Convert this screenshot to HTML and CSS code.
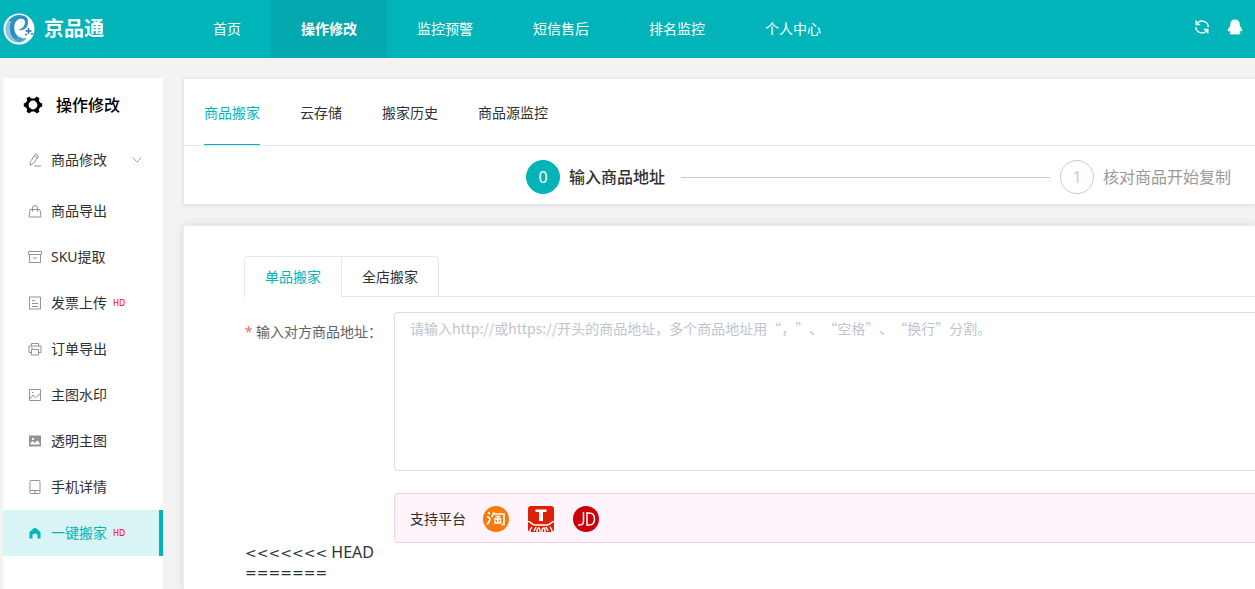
FILE: index.html
```html
<!DOCTYPE html>
<html lang="zh-CN">
<head>
<meta charset="utf-8">
<title>京品通</title>
<link rel="stylesheet" href="styles.css">
</head>
<body>
<header class="topbar">
  <a class="brand" href="#">
    <svg class="brand-logo" viewBox="0 0 32 32" aria-hidden="true">
      <defs><linearGradient id="swirl" x1="0" y1="0" x2="1" y2="1"><stop offset="0" stop-color="#2aa9bd"/><stop offset="0.5" stop-color="#2c86c4"/><stop offset="1" stop-color="#5cc0cc"/></linearGradient></defs>
      <circle cx="16" cy="16" r="15.5" fill="#fff"/>
      <path d="M6 7C1 14 2 22 8 27c6 4 12 3 16-2-5 1-10-1-12-6-2-6 0-11 4-13 3-1 6 0 6 3 0 4-3 7-7 8 6 1 10-2 10-7 1-6-4-8-9-8-4 0-8 2-10 5z" fill="url(#swirl)"/>
      <path d="M5 8c-4 7-3 14 2 18 2 2 5 3 8 3C8 25 5 17 8 8z" fill="#8bc8dc"/>
      <path d="M25.500 15v6m-3-3h6M22 21.500h2m4-.5h2" stroke="#2477b8" stroke-width="1.500" fill="none"/>
    </svg>
    <span>京品通</span>
  </a>
  <nav class="topnav">
    <a href="#">首页</a>
    <a class="is-active" href="#">操作修改</a>
    <a href="#">监控预警</a>
    <a href="#">短信售后</a>
    <a href="#">排名监控</a>
    <a href="#">个人中心</a>
  </nav>
  <div class="tools">
    <button type="button" aria-label="刷新">
      <svg width="16" height="16" viewBox="0 0 16 16" fill="none" stroke="#fff" stroke-width="1.4"><path d="M3 4.5A6.3 6.3 0 0 1 14.3 8M13 11.500A6.300 6.300 0 0 1 1.700 8M2.200 1.500v4h4M13.800 14.500v-4h-4"/></svg>
    </button>
    <button type="button" aria-label="QQ客服">
      <svg width="16" height="16" viewBox="0 0 16 16" fill="#fff"><path d="M8 .5C5 .5 3.300 2.600 3.300 5.200v1.600C2 8.300.8 10 .8 11.700c0 1 .9.900 1.600-.2.200.8.600 1.500 1.200 2-.8.300-1.100.8-1.100 1.200 0 1 4.500 1 5.500.200 1 .8 5.500.8 5.500-.2 0-.4-.3-.9-1.100-1.200.6-.5 1-1.200 1.200-2 .7 1.100 1.600 1.200 1.600.2 0-1.700-1.200-3.400-2.500-4.900V5.200C12.700 2.600 11 .5 8 .5z"/></svg>
    </button>
  </div>
</header>

<div class="layout">
  <aside class="sidebar">
    <h2 class="side-title">
      <svg width="20" height="20" viewBox="0 0 20 20"><path fill="#000" fill-rule="evenodd" d="M6.500 1.500c1 1.600 1.600 2 3.500 2s2.500-.4 3.500-2l3 1.800c-1 1.700-.8 2.500.2 3.700.6 1 1.200 1.200 2.500 1.300v3.400c-1.300.1-1.900.3-2.500 1.300-1 1.200-1.200 2-.2 3.700l-3 1.800c-1-1.600-1.600-2-3.500-2s-2.500.4-3.500 2l-3-1.800c1-1.700.8-2.500-.2-3.700-.6-1-1.200-1.200-2.500-1.300V8.300C2.100 8.200 2.700 8 3.300 7c1-1.200 1.200-2 .2-3.700zM10 5.600a4.400 4.400 0 1 0 0 8.800 4.400 4.400 0 0 0 0-8.800z"/></svg>
      <span>操作修改</span>
    </h2>
    <nav class="menu">
      <a class="menu-item is-group" href="#">
        <svg class="icon" viewBox="0 0 14 14"><path d="M2.500 8.500L7.500 1l3 2-5 7.500-3.300 1.800zM6.300 2.800l3 2M6 13h7"/></svg>
        <span>商品修改</span>
        <svg class="chevron" viewBox="0 0 10 6"><path d="M.5.5L5 5 9.500.5"/></svg>
      </a>
      <a class="menu-item" href="#">
        <svg class="icon" viewBox="0 0 14 14"><path d="M2 5.500h10l1 7.500H1zM4.500 7.500V4a2.500 2.500 0 0 1 5 0v3.500"/></svg>
        <span>商品导出</span>
      </a>
      <a class="menu-item" href="#">
        <svg class="icon" viewBox="0 0 14 14"><path d="M.5 1.500h13v3H.5zM1.500 4.500v8h11v-8M5 8h4"/></svg>
        <span>SKU提取</span>
      </a>
      <a class="menu-item" href="#">
        <svg class="icon" viewBox="0 0 14 14"><path d="M1.500 1h11v12h-11zM4 4.500h3M4 7.500h6M4 10.500h6"/></svg>
        <span>发票上传</span><em class="hd">HD</em>
      </a>
      <a class="menu-item" href="#">
        <svg class="icon" viewBox="0 0 14 14"><path d="M3.500 4V1.500h7V4M3.500 10.500h-2.500V4h12v6.500h-2.500M3.500 7.500h7V13h-7zM3 6h2"/></svg>
        <span>订单导出</span>
      </a>
      <a class="menu-item" href="#">
        <svg class="icon" viewBox="0 0 14 14"><path d="M1.500 1.500h11v11h-11zM2 11l3-4 2.500 2.500L12 6M4 4.500h1.500"/></svg>
        <span>主图水印</span>
      </a>
      <a class="menu-item" href="#">
        <svg class="icon is-solid" viewBox="0 0 14 14"><path fill-rule="evenodd" d="M1.500 1.500h11q.5 0 .5.500v10q0 .5-.5.500h-11Q1 12.500 1 12V2q0-.5.500-.5zM2.500 10.500h9v-2l-2.500-2-2 2.500-2.500-2-2 2zM4 4v2h2V4z"/></svg>
        <span>透明主图</span>
      </a>
      <a class="menu-item" href="#">
        <svg class="icon" viewBox="0 0 14 14"><path d="M3 .5h8q1 0 1 1v11q0 1-1 1H3q-1 0-1-1v-11q0-1 1-1zM2 10.500h10M6 12h2"/></svg>
        <span>手机详情</span>
      </a>
      <a class="menu-item is-active" href="#">
        <svg class="icon is-solid" viewBox="0 0 14 14"><path d="M7 1.500L1.500 6v6.500h3V9q0-1.500 2.500-1.500T9.500 9v3.500h3V6z"/></svg>
        <span>一键搬家</span><em class="hd">HD</em>
      </a>
    </nav>
  </aside>

  <main class="content">
    <section class="card">
      <nav class="tabs">
        <a class="is-active" href="#">商品搬家</a>
        <a href="#">云存储</a>
        <a href="#">搬家历史</a>
        <a href="#">商品源监控</a>
      </nav>
      <div class="steps">
        <span class="step is-current"><b class="num">0</b><span>输入商品地址</span></span>
        <span class="rail"></span>
        <span class="step"><b class="num">1</b><span>核对商品开始复制</span></span>
      </div>
    </section>

    <section class="panel">
      <div class="subtabs">
        <button class="is-active" type="button">单品搬家</button>
        <button type="button">全店搬家</button>
      </div>
      <form class="form">
        <label for="urls"><i>*</i> 输入对方商品地址：</label>
        <div class="field">
          <textarea id="urls" placeholder="请输入http://或https://开头的商品地址，多个商品地址用“，”、“空格”、“换行”分割。"></textarea>
          <div class="platforms">
            <span>支持平台</span>
            <svg viewBox="0 0 26 26" role="img" aria-label="淘宝"><circle cx="13" cy="13" r="13" fill="#f97a0c"/><path d="M5 6.500l2 1.500M4 10.500l2.500 1.500c1 1-.5 4-2.500 6.500M11 6l-2 5M10.500 8H21v10.500h-2.500M12.500 10.500h5M11 13h7.500M14.800 10.500V17M12 14.500V17h5.500v-2.500" fill="none" stroke="#fff" stroke-width="1.700"/></svg>
            <svg viewBox="0 0 26 26" role="img" aria-label="天猫"><rect width="26" height="26" rx="3" fill="#dd2008"/><path d="M7.500 3.500h11v2.500h-3.500v9h-4V6H7.500z" fill="#fff"/><path d="M0 15.500c3 0 3.500 3.500 7 3.500h12c3.500 0 4-3.500 7-3.500M2 26c0-3 1-4 2-5M8 21l-2 4M9 26c0-3 1-4 2-4s1 2 1 4M14 26c0-3 1-4 2-4s1 2 1 4M18 21l2 4M24 26c0-3-1-4-2-5" fill="none" stroke="#fff" stroke-width="1.500"/></svg>
            <svg viewBox="0 0 26 26" role="img" aria-label="京东"><circle cx="13" cy="13" r="13" fill="#cb000a"/><path d="M10.500 6v9.500q0 4-5.500 3.500M14 7v12h2q5.500 0 5.500-6T16 7z" fill="none" stroke="#fff" stroke-width="1.500"/></svg>
          </div>
        </div>
      </form>
      <p class="marker"><span>&lt;&lt;&lt;&lt;&lt;&lt;&lt;</span> HEAD<br><span>=======</span></p>
    </section>
  </main>
</div>
</body>
</html>
```

FILE: styles.css
```css
* { box-sizing: border-box; }

html { height: 100%; }

body {
  margin: 0;
  min-height: 100%;
  display: flex;
  flex-direction: column;
  overflow: hidden;
  background: #f3f3f3;
  color: #303133;
  font: 14px/20px "Noto Sans", "Noto Sans CJK SC", sans-serif;
}

a { color: inherit; text-decoration: none; }
button { font: inherit; cursor: pointer; }

.topbar {
  display: flex;
  height: 58px;
  background: #01b4ba;
  color: #fff;
}

.brand {
  display: flex;
  align-items: center;
  gap: 9px;
  width: 183px;
  padding-left: 3px;
  font-size: 20px;
  font-weight: 700;
}

.brand-logo { width: 32px; height: 32px; }

.topnav { display: flex; flex: 1; }
.topnav a { padding: 0 30px; line-height: 58px; }
.topnav .is-active { background: #04a9af; font-weight: 700; }

.tools {
  display: flex;
  align-items: center;
  gap: 17px;
  padding: 0 12px 4px 0;
}

.tools button { display: flex; padding: 0; border: 0; background: none; }

.layout {
  display: flex;
  flex: 1;
  gap: 20px;
  padding: 20px 0 0 3px;
}

.sidebar { width: 160px; background: #fff; }

.side-title {
  display: flex;
  align-items: center;
  gap: 13px;
  height: 54px;
  margin: 0;
  padding-left: 20px;
  color: #000;
  font-size: 16px;
  font-weight: 500;
}

.menu-item {
  display: flex;
  align-items: center;
  height: 46px;
  padding-left: 25px;
}

.menu-item.is-group { height: 56px; padding-right: 21px; }
.menu-item.is-active { border-right: 4px solid #01b4ba; background: #d9f4f5; color: #01b4ba; }

.icon {
  width: 14px;
  height: 14px;
  margin-right: 9px;
  fill: none;
  stroke: #909399;
}

.icon.is-solid { fill: #909399; stroke: none; }
.is-active .icon.is-solid { fill: #01b4ba; }

.chevron {
  width: 10px;
  height: 6px;
  margin-left: auto;
  fill: none;
  stroke: #a5a8ae;
}

.hd {
  margin-left: 6px;
  padding-top: 1px;
  color: #f00;
  font: 8px/10px "DejaVu Sans", sans-serif;
}

.content {
  display: flex;
  flex: 1;
  flex-direction: column;
  gap: 20px;
  min-width: 0;
}

.card {
  border: 1px solid #e6e6e8;
  border-right: 0;
  background: #fff;
  box-shadow: 0 1px 3px rgba(0, 0, 0, 0.08);
}

.tabs {
  display: flex;
  gap: 40px;
  height: 67px;
  padding: 0 20px;
  border-bottom: 1px solid #e4e7ed;
  line-height: 68px;
}

.tabs .is-active { border-bottom: 1px solid #01b4ba; color: #01b4ba; }

.steps {
  display: flex;
  align-items: center;
  padding: 14px 24px 10px 342px;
}

.step {
  display: flex;
  align-items: center;
  gap: 9px;
  color: #999;
  font-size: 16px;
  line-height: 24px;
}

.num {
  display: flex;
  align-items: center;
  justify-content: center;
  width: 34px;
  height: 34px;
  border: 1px solid #ccc;
  border-radius: 50%;
  color: #ccc;
  font-weight: 400;
}

.step.is-current { color: #303133; font-weight: 500; }
.is-current .num { border-color: #01b4ba; background: #01b4ba; color: #fff; }
.rail { flex: 1; height: 1px; margin: 0 10px 0 16px; background: #c8c8c8; }

.panel {
  flex: 1;
  padding: 30px 0 0 60px;
  border: 1px solid #ebeef5;
  border-width: 1px 0 0 1px;
  border-radius: 4px 0 0 0;
  background: #fff;
  box-shadow: 0 0 8px rgba(0, 0, 0, 0.12);
}

.subtabs { display: flex; border-bottom: 1px solid #e4e7ed; }

.subtabs button {
  height: 40px;
  padding: 0 20px;
  border: 1px solid #e4e7ed;
  border-bottom: 0;
  border-left: 0;
  border-radius: 0 4px 0 0;
  background: #fff;
  color: #303133;
}

.subtabs .is-active {
  height: 41px;
  margin-bottom: -1px;
  border-left: 1px solid #e4e7ed;
  border-radius: 4px 0 0 0;
  color: #01b4ba;
}

.form { display: flex; padding-top: 15px; }

.form label {
  width: 150px;
  padding-right: 12px;
  color: #606266;
  line-height: 40px;
  text-align: right;
  white-space: nowrap;
}

.form label i { color: #f56c6c; font-style: normal; }

.field { flex: 1; min-width: 0; }

.field textarea {
  display: block;
  width: 100%;
  height: 159px;
  padding: 5px 15px;
  border: 1px solid #dcdfe6;
  border-right: 0;
  border-radius: 4px 0 0 4px;
  color: #606266;
  font: 14px/20px "Noto Sans CJK SC", sans-serif;
  text-spacing-trim: space-all;
  resize: none;
}

.field textarea::placeholder { color: #c0c4cc; }

.platforms {
  display: flex;
  align-items: center;
  gap: 19px;
  height: 50px;
  margin-top: 22px;
  padding: 2px 0 0 15px;
  border: 1px solid #fbd0dc;
  border-right: 0;
  border-radius: 4px 0 0 4px;
  background: #fff4fb;
}

.platforms span { margin-right: -2px; }
.platforms svg { width: 26px; height: 26px; }

.marker { margin: 0; padding-left: 1px; font-size: 16px; line-height: 19px; }
.marker span { font: 14px/19px "DejaVu Sans", sans-serif; }
```
